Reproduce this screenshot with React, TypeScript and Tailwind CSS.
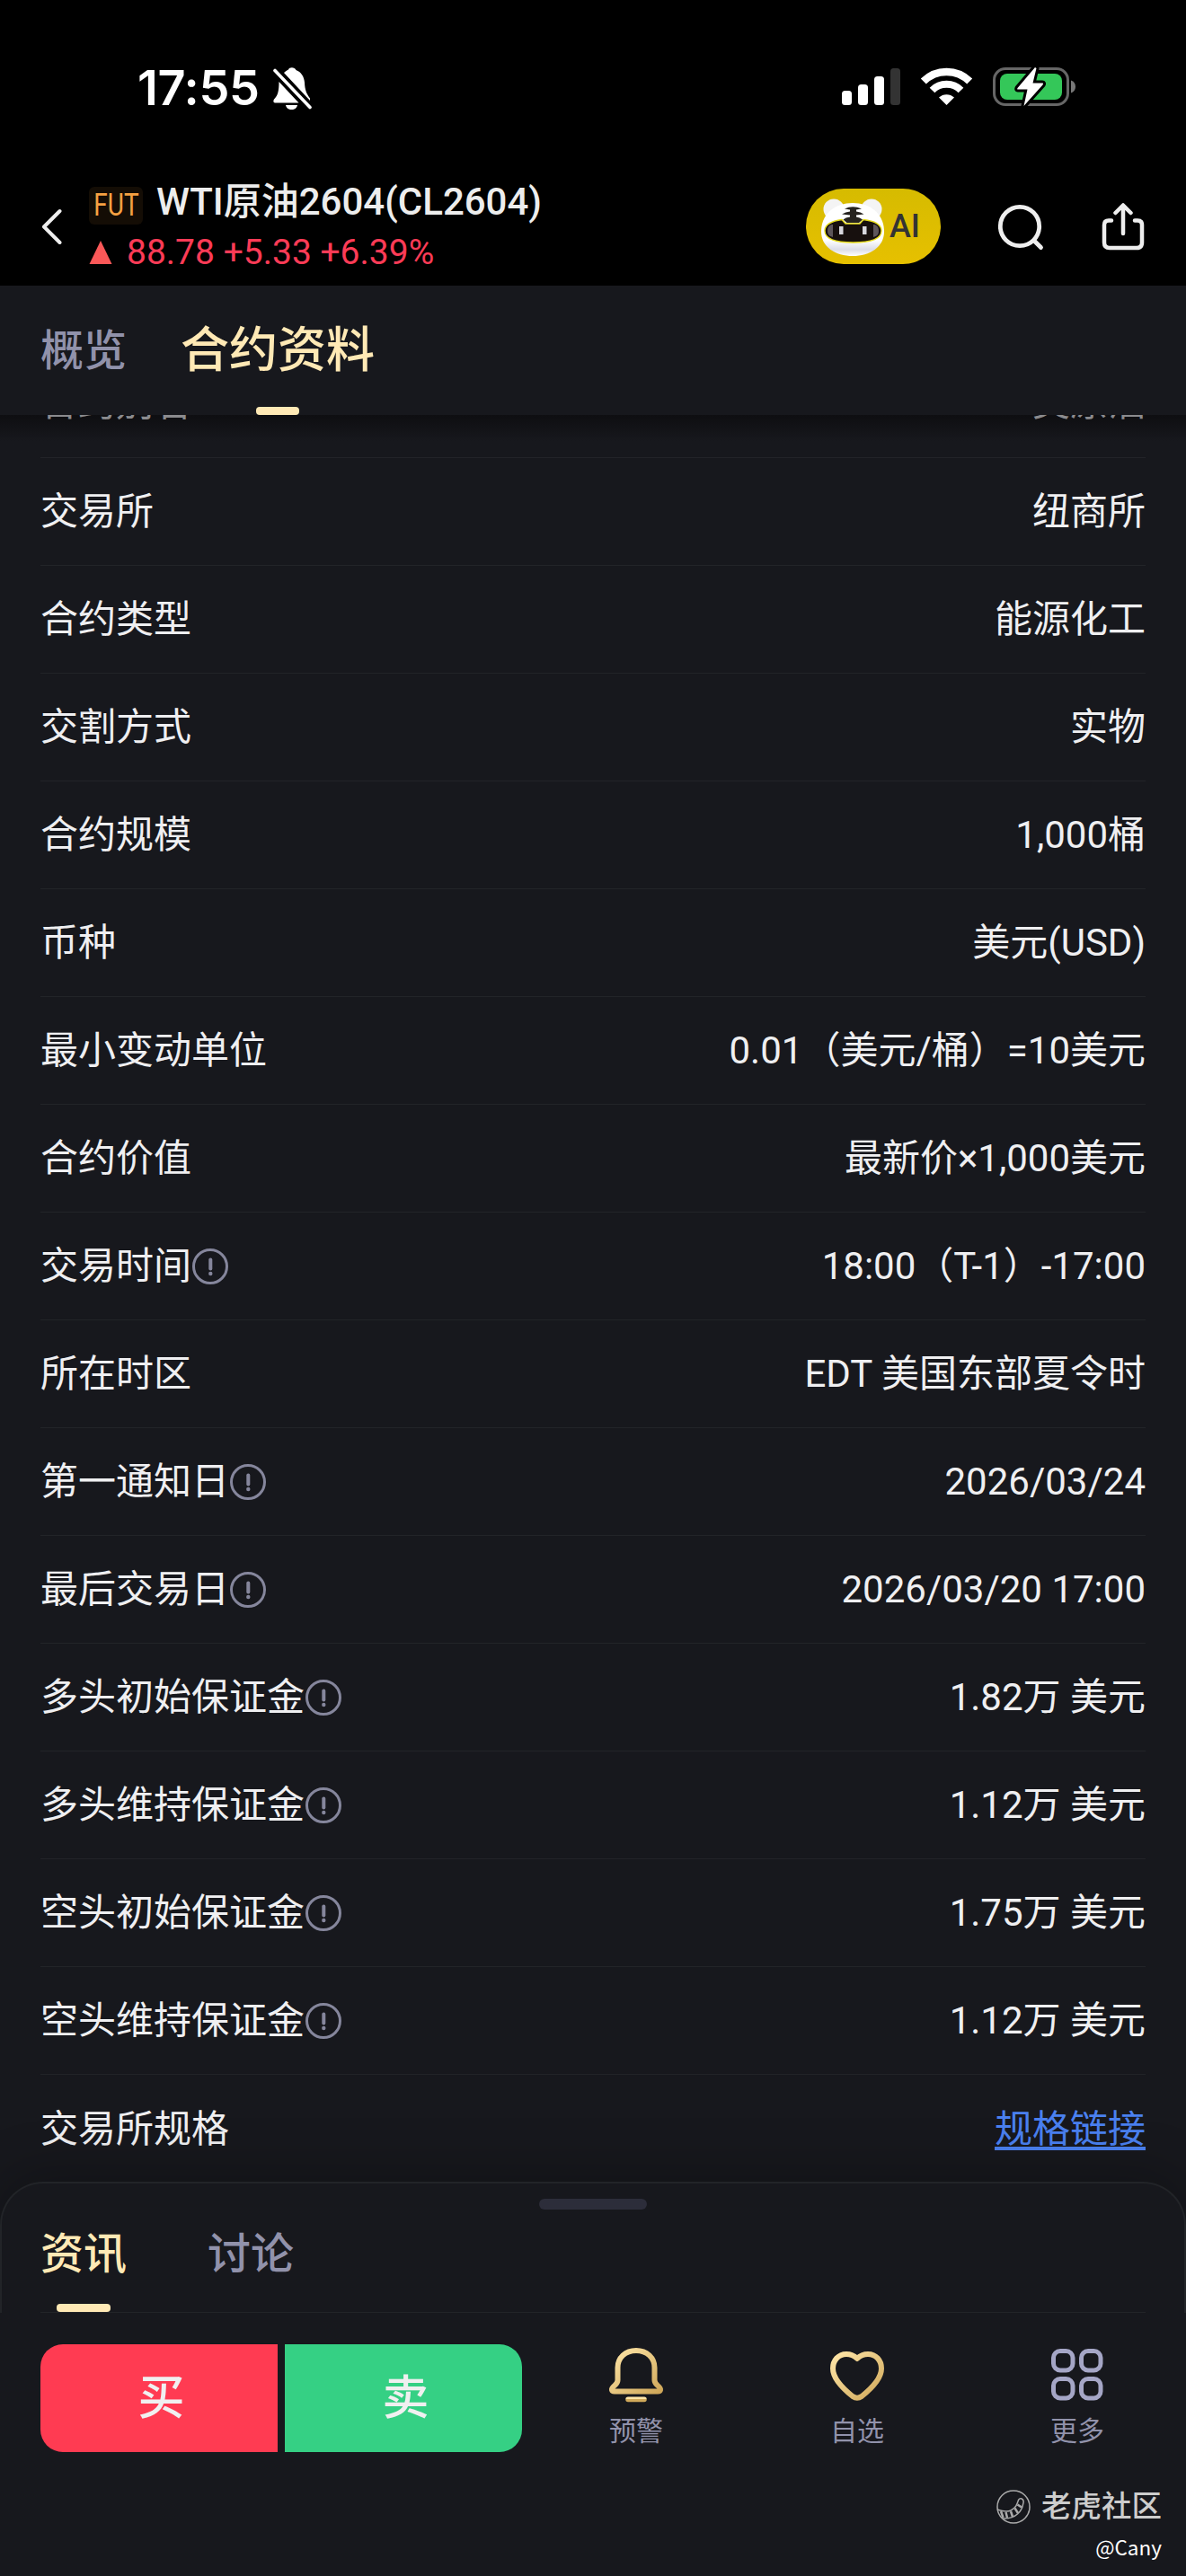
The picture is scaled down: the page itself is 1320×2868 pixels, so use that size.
type Row = {
  label: string;
  value: string;
  info?: boolean;
  link?: boolean;
};

const rows: Row[] = [
  { label: "交易所", value: "纽商所" },
  { label: "合约类型", value: "能源化工" },
  { label: "交割方式", value: "实物" },
  { label: "合约规模", value: "1,000桶" },
  { label: "币种", value: "美元(USD)" },
  { label: "最小变动单位", value: "0.01（美元/桶）=10美元" },
  { label: "合约价值", value: "最新价×1,000美元" },
  { label: "交易时间", value: "18:00（T-1）-17:00", info: true },
  { label: "所在时区", value: "EDT 美国东部夏令时" },
  { label: "第一通知日", value: "2026/03/24", info: true },
  { label: "最后交易日", value: "2026/03/20 17:00", info: true },
  { label: "多头初始保证金", value: "1.82万 美元", info: true },
  { label: "多头维持保证金", value: "1.12万 美元", info: true },
  { label: "空头初始保证金", value: "1.75万 美元", info: true },
  { label: "空头维持保证金", value: "1.12万 美元", info: true },
  { label: "交易所规格", value: "规格链接", link: true },
];

function StatusBar() {
  return (
    <div className="h-[196px] shrink-0 pl-[153px] pr-[120px] flex items-start justify-between">
      <div className="flex items-center pt-[72px]">
        <span className="w-[150px] font-['Inter'] text-[54px] leading-[52px] font-semibold tracking-[-0.3px] text-white">
          17:55
        </span>
        <svg width="44" height="50" viewBox="0 0 44 50" fill="#fff">
          <path d="M13 8C15 6 17 5 18 4.500C19 1.500 25 1.500 26.500 5C32 7 35.500 12 36 19C36.300 27 38 31 42 36.500V39Z" />
          <path d="M7.500 18L29.500 41.500H3C1 41.500 1 38.500 2.500 37C6 33 7.500 29 7.500 18Z" />
          <path d="M15 44H28C27.500 47 25 49 21.500 49S15.500 47 15 44Z" />
          <path d="M3 5.500L42 46.500" stroke="#fff" strokeWidth="3.600" strokeLinecap="round" />
        </svg>
      </div>
      <div className="flex items-start pt-[74px]">
        <svg width="66" height="44" viewBox="0 0 66 44" fill="#fff">
          <rect x="1" y="27" width="11" height="16" rx="3.500" />
          <rect x="19" y="20" width="11" height="23" rx="3.500" />
          <rect x="37" y="11" width="11" height="32" rx="3.500" />
          <rect x="55" y="2" width="11" height="41" rx="3.500" fill="#333" />
        </svg>
        <svg className="ml-[22px]" width="60" height="44" viewBox="0 0 60 44">
          <path d="M29.500 43L21 34.500A12.500 12.500 0 0 1 38 34.500Z" fill="#fff" />
          <path d="M13.500 26.500A22.500 22.500 0 0 1 45.500 26.500" fill="none" stroke="#fff" strokeWidth="8" />
          <path d="M3.800 16.500A36.500 36.500 0 0 1 55.200 16.500" fill="none" stroke="#fff" strokeWidth="8.500" />
        </svg>
        <svg className="ml-5" width="96" height="46" viewBox="0 0 96 46">
          <rect x="2.500" y="2.500" width="82" height="40" rx="12.500" fill="none" stroke="#666" strokeWidth="3" />
          <path d="M88 15.500C91 16.500 93 19 93 22.500S91 28.500 88 29.500Z" fill="#777" />
          <rect x="9" y="8" width="69" height="29" rx="8" fill="#34c759" />
          <path
            d="M48 1L28.500 24C28 25 28 25.500 29 25.500H39.500L35.500 44L56.500 20.500C57.500 19 57 18.500 56 18.500H45.500L49.500 2Z"
            fill="#fff"
            stroke="#000"
            strokeWidth="6"
            strokeLinejoin="round"
            paintOrder="stroke"
          />
        </svg>
      </div>
    </div>
  );
}

function TigerFace() {
  return (
    <svg width="74" height="68" viewBox="0 0 74 68">
      <defs>
        <linearGradient id="face" x1="0" y1="0" x2="0" y2="1">
          <stop offset="0.7" stopColor="#fff" />
          <stop offset="0.88" stopColor="#dcdde8" />
          <stop offset="1" stopColor="#fff" />
        </linearGradient>
      </defs>
      <circle cx="15" cy="15" r="11.500" fill="#f4f4f4" />
      <circle cx="57" cy="15" r="11.500" fill="#f4f4f4" />
      <path d="M36 8C56 8 71 20 71 40C71 57 55 67 36 67S1 57 1 40C1 20 16 8 36 8Z" fill="url(#face)" />
      <path
        d="M5 39C5 32 13 28 24 26.500L28 31H44L48 26.500C60 28 68 32 68 39C68 48 56 52 36.500 52S5 48 5 39Z"
        fill="#17100e"
        stroke="#e6dc1c"
        strokeWidth="1.400"
      />
      <path d="M8 39C8 34 11 32 14 32V46C10 45 8 43 8 39ZM65 39C65 34 62 32 59 32V46C63 45 65 43 65 39Z" fill="#5d565a" />
      <path d="M27 14.500Q36 10 46 14.500L40 15.500V17.500Q45 18 48.500 20.500L40 21.500V23.500Q44 24 47 26.500L43 30H29.500L25.500 26.500Q28 24 33 23.500V21.500L24 20.500Q28 18 33 17.500V15.500Z" fill="#26231f" />
      <rect x="21" y="34" width="4.500" height="9" fill="#d8d8de" />
      <rect x="47" y="34" width="4.500" height="9" fill="#d8d8de" />
    </svg>
  );
}

function Header() {
  return (
    <div className="h-[122px] shrink-0 flex items-start">
      <svg className="ml-[45px] mt-9" width="26" height="42" viewBox="0 0 26 42" fill="none">
        <path d="M21.500 3L4 20.500L21.500 38" stroke="#eee" strokeWidth="4" strokeLinecap="round" strokeLinejoin="round" />
      </svg>
      <div className="ml-7 mt-px w-[798px]">
        <div className="flex items-center h-14">
          <span className="mt-[7px] w-[60px] h-[42px] rounded-md bg-[#140d05] flex items-center justify-center">
            <span className="inline-block scale-x-[0.8] text-[35px] leading-none text-[#f5a142]">FUT</span>
          </span>
          <span className="ml-[15px] text-[42px] leading-[56px] font-medium text-[#ededed]">
            WTI原油2604(CL2604)
          </span>
        </div>
        <div className="flex items-center h-[56px]">
          <svg width="26" height="26" viewBox="0 0 26 26">
            <path d="M13 0L25.500 26H0.500Z" fill="#fa5858" />
          </svg>
          <span className="ml-4 text-[39px] leading-[56px] text-[#fc3b56]">88.78 +5.33 +6.39%</span>
        </div>
      </div>
      <div className="mt-[14px] w-[150px] h-[84px] rounded-full bg-linear-to-t from-[#e6c000] to-[#d6bb00] flex items-center pl-4">
        <TigerFace />
        <span className="ml-[3px] text-[36px] font-medium leading-none text-[#333]">AI</span>
      </div>
      <svg className="ml-[62px] mt-[30px]" width="56" height="56" viewBox="0 0 56 56" fill="none" stroke="#eee" strokeWidth="4.800">
        <circle cx="26" cy="26" r="21.700" />
        <path d="M42 42L49.500 49.500" strokeLinecap="round" />
      </svg>
      <svg className="ml-[59px] mt-[28px]" width="52" height="56" viewBox="0 0 52 56" fill="none" stroke="#eee" strokeWidth="4.500" strokeLinecap="round" strokeLinejoin="round">
        <path d="M13 21.500H10Q5 21.500 5 26.500V46Q5 52 11 52H41Q47 52 47 46V26.500Q47 21.500 42 21.500H39" />
        <path d="M26 36V5.500M17.500 13L26 4.500L34.500 13" />
      </svg>
    </div>
  );
}

function InfoIcon() {
  return (
    <svg className="ml-px" width="40" height="40" viewBox="0 0 40 40" fill="none" stroke="#85869c">
      <circle cx="20" cy="20" r="18.500" strokeWidth="3" />
      <path d="M20.300 12.500V22.500" strokeWidth="4" strokeLinecap="round" />
      <circle cx="20.300" cy="28" r="2.200" fill="#85869c" stroke="none" />
    </svg>
  );
}

function Watermark() {
  return (
    <div className="flex-1 pr-[27px] flex flex-col items-end pt-[41px]">
      <div className="flex items-center">
        <svg width="40" height="40" viewBox="0 0 40 40" fill="none" stroke="#aaa">
          <circle cx="20" cy="20" r="18" strokeWidth="1.500" />
          <path d="M2 23C8 25 13 26 17 24C23 21 24 17 25.500 12.500C27 9 32 11 31 15.500C30 24 23 34 8 33" strokeWidth="1.500" />
          <path d="M6 25L8.500 32M11.500 26L13 32M17 25L19 31M21.500 21.500L25 27M24.500 17.500L29 20.500" strokeWidth="2.500" />
        </svg>
        <span className="ml-[11px] text-[33.500px] leading-[40px] font-medium text-[#cdcdcd]">老虎社区</span>
      </div>
      <span className="mt-[6px] font-['Noto_Sans_CJK_SC',sans-serif] text-[22.500px] leading-[36px] text-white">@Cany</span>
    </div>
  );
}

export default function App() {
  return (
    <div className="w-[1320px] h-[2868px] overflow-hidden flex flex-col bg-[#17181d] font-['Roboto','Noto_Sans_CJK_SC',sans-serif]">
      <div className="bg-black flex flex-col">
        <StatusBar />
        <Header />
      </div>

      {/* Tabs */}
      <div className="h-36 shrink-0 pl-[45px] flex gap-[60px]">
        <span className="pt-[37px] text-[48px] leading-[72px] font-medium text-[#9192ab]">概览</span>
        <div className="flex flex-col items-center justify-between">
          <span className="pt-[34px] text-[54px] leading-[78px] font-medium text-[#ffe9b5]">合约资料</span>
          <span className="w-12 h-[9px] rounded-[4px] bg-[#ffe9b5]" />
        </div>
      </div>

      {/* Row scrolled under the tabs */}
      <div className="h-12 shrink-0 px-[45px] overflow-hidden bg-linear-to-b from-[#0e0e11] to-[#17181d] to-60%">
        <div className="h-12 border-b border-[#222428] flex items-end justify-between overflow-hidden text-[42px] text-[#8b8b8e]">
          <span className="leading-[120px] h-[120px]">合约别名</span>
          <span className="leading-[120px] h-[120px]">美原油</span>
        </div>
      </div>

      {/* Contract rows */}
      <div className="h-[1919px] shrink-0 px-[45px] overflow-hidden">
        {rows.map((row) => (
          <div
            key={row.label}
            className="h-[120px] border-b border-[#222428] last:border-b-0 flex items-center justify-between text-[42px] text-[#efeff1]"
          >
            <span className="flex items-center">
              {row.label}
              {row.info && <InfoIcon />}
            </span>
            {row.link ? (
              <a className="text-[#4a80f0] underline decoration-4 underline-offset-[5px] [text-decoration-skip-ink:none]">
                {row.value}
              </a>
            ) : (
              <span>{row.value}</span>
            )}
          </div>
        ))}
      </div>

      {/* Bottom sheet */}
      <div className="h-[146px] shrink-0 border-2 border-b-0 border-[#222428] rounded-t-[48px] bg-[#17181d] shadow-[0_-8px_60px_rgba(0,0,0,0.25)] flex flex-col px-[43px]">
        <div className="mt-[17px] w-[120px] h-3 shrink-0 rounded-full bg-[#2c2d3a] self-center" />
        <div className="flex-1 flex gap-[90px] border-b border-[#222428]">
          <div className="flex flex-col items-center justify-between">
            <span className="pt-[14px] text-[48px] leading-[72px] font-medium text-[#ffe9b5]">资讯</span>
            <span className="w-[60px] h-[9px] rounded-[4px] bg-[#ffe9b5]" />
          </div>
          <span className="pt-[14px] text-[48px] leading-[72px] font-medium text-[#9192ab]">讨论</span>
        </div>
      </div>

      {/* Action bar */}
      <div className="h-[155px] shrink-0 pt-[35px] pl-[45px] flex items-start bg-[#17181d]">
        <div className="flex gap-2 text-[52px] font-medium text-[#f0f0f0]">
          <button className="w-[264px] h-[120px] pl-[5px] pt-0.5 rounded-l-[25px] bg-[#ff3b52]">买</button>
          <button className="w-[264px] h-[120px] pl-[5px] pt-0.5 rounded-r-[25px] bg-[#35d084]">卖</button>
        </div>
        <svg width="0" height="0">
          <defs>
            <linearGradient id="gold" x1="0" y1="0" x2="1" y2="1">
              <stop offset="0" stopColor="#ffe6a8" />
              <stop offset="1" stopColor="#d0a85a" />
            </linearGradient>
          </defs>
        </svg>
        <div className="ml-[82px] mt-px w-[90px] flex flex-col items-center text-[30px] leading-[44px] text-[#9192ab]">
          <svg width="64" height="66" viewBox="0 0 64 66" fill="none" stroke="url(#gold)" strokeWidth="6" strokeLinecap="round" strokeLinejoin="round">
            <path d="M32 6C20 6 11.500 14 11.500 25V39Q11.500 42 8 45C3 49 5 51.500 8 51.500H56C59 51.500 61 49 56 45Q52.500 42 52.500 39V25C52.500 14 44 6 32 6Z" />
            <path d="M23 60.300H41L41 60.400H23Z" strokeWidth="5.500" />
          </svg>
          <span className="mt-[8px]">预警</span>
        </div>
        <div className="ml-[156px] mt-px w-[90px] flex flex-col items-center text-[30px] leading-[44px] text-[#9192ab]">
          <svg width="64" height="66" viewBox="0 0 64 66" fill="none" stroke="url(#gold)" strokeWidth="6" strokeLinejoin="round">
            <path d="M32 15C28 11 24 10 20 10C11 10 5 17 5 26C5 38 17 49 27 57Q32 60.500 37 57C47 49 59 38 59 26C59 17 53 10 44 10C40 10 36 11 32 15Z" />
          </svg>
          <span className="mt-[8px]">自选</span>
        </div>
        <div className="ml-[155px] mt-px w-[90px] flex flex-col items-center text-[30px] leading-[44px] text-[#9192ab]">
          <svg width="64" height="66" viewBox="0 0 64 66" fill="none" stroke="#a5a6c6" strokeWidth="5">
            <rect x="5.500" y="6.500" width="21.500" height="21.500" rx="7.500" />
            <rect x="36.500" y="6.500" width="21.500" height="21.500" rx="7.500" />
            <rect x="5.500" y="37.500" width="21.500" height="21.500" rx="7.500" />
            <rect x="36.500" y="37.500" width="21.500" height="21.500" rx="7.500" />
          </svg>
          <span className="mt-[8px]">更多</span>
        </div>
      </div>

      <Watermark />
    </div>
  );
}
